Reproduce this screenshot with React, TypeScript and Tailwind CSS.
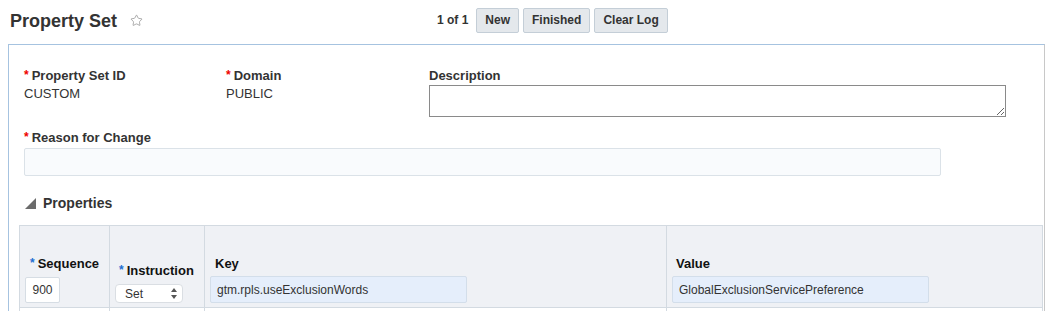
import React from "react";
import { Star } from "lucide-react";

const Req = ({ color = "text-[#e00]" }: { color?: string }) => (
  <span className={`${color} relative -top-[1px] mr-[3px] text-[12px]`}>*</span>
);

const ToolbarButton = ({ label }: { label: string }) => (
  <button className="h-[25px] rounded-[2px] border border-[#c4ced7] bg-[#e4e8ec] px-[8px] text-[12px] font-bold text-[#333]">
    {label}
  </button>
);

const SortArrows = () => (
  <svg width="6" height="11" viewBox="0 0 6 11" className="text-[#555]">
    <polygon points="3,0 6,4 0,4" fill="currentColor" />
    <polygon points="0,7 6,7 3,11" fill="currentColor" />
  </svg>
);

export default function App() {
  return (
    <div
      className="h-[311px] w-[1046px] overflow-hidden bg-white text-[#333]"
      style={{ fontFamily: '"Liberation Sans", Arial, sans-serif' }}
    >
      {/* Header */}
      <div className="flex h-[44px]">
        <div className="flex w-[437px] items-start pl-[10px] pt-[11px]">
          <h1 className="text-[18px] font-bold leading-[20px] text-[#333]">Property Set</h1>
          <Star size={13} strokeWidth={1.3} className="ml-[13px] mt-[3px] text-[#8a8a8a]" />
        </div>
        <div className="flex h-[40px] items-center gap-[4px]">
          <span className="mr-[4px] text-[12px] font-bold text-[#333]">1 of 1</span>
          <ToolbarButton label="New" />
          <ToolbarButton label="Finished" />
          <ToolbarButton label="Clear Log" />
        </div>
      </div>

      {/* Panel */}
      <div className="ml-[8px] h-[267px] w-[1037px] border-l border-t border-r border-[#a6c3e0] border-r-[#c8c8c8]">
        <div className="pl-[15px] pt-[23px]">
          <div className="flex">
            <div className="w-[202px]">
              <div className="text-[13px] font-bold leading-[15px]">
                <Req />
                Property Set ID
              </div>
              <div className="mt-[2px] text-[13px] leading-[15px]">CUSTOM</div>
            </div>
            <div className="w-[203px]">
              <div className="text-[13px] font-bold leading-[15px]">
                <Req />
                Domain
              </div>
              <div className="mt-[2px] text-[13px] leading-[15px]">PUBLIC</div>
            </div>
            <div>
              <div className="text-[13px] font-bold leading-[15px]">Description</div>
              <textarea className="mt-[2px] block h-[32px] w-[577px] border border-[#8a8a8a] bg-white" />
            </div>
          </div>

          <div className="mt-[13px] text-[13px] font-bold leading-[15px]">
            <Req />
            Reason for Change
          </div>
          <div className="mt-[2px] h-[28px] w-[917px] rounded-[2px] border border-[#dbe2e8] bg-[#f9fbfd]" />

          <div className="mt-[19px] flex items-center">
            <svg width="11" height="11" viewBox="0 0 11 11" className="ml-[1px]">
              <polygon points="11,0 11,11 0,11" fill="#6b6b6b" />
            </svg>
            <span className="ml-[7px] text-[14px] font-bold leading-[16px] text-[#333]">Properties</span>
          </div>
        </div>

        {/* Table */}
        <div className="ml-[10px] mt-[14px] w-[1024px] border-l border-t border-[#d3dae1]">
          <div className="grid h-[82px] grid-cols-[90px_95px_462px_1fr] border-b border-[#d3dae1] bg-[#eff1f5] text-[13px] text-[#111]">
            <div className="flex flex-col justify-end border-r border-[#d3dae1] px-[5px] pb-[4px]">
              <div className="mb-[5px] pl-[5px] font-bold leading-[15px]">
                <Req color="text-[#1f6fd1]" />
                Sequence
              </div>
              <div className="flex h-[26px] w-[35px] items-center justify-center rounded-[2px] border border-[#d6dde4] bg-white text-[12px] text-[#333]">
                900
              </div>
            </div>
            <div className="flex flex-col justify-end border-r border-[#d3dae1] px-[5px] pb-[4px]">
              <div className="mb-[5px] pl-[4px] font-bold leading-[15px]">
                <Req color="text-[#1f6fd1]" />
                Instruction
              </div>
              <div className="flex h-[19px] w-[68px] items-center justify-between rounded-[4px] border border-[#dadee3] bg-white pl-[9px] pr-[5px] text-[12px] text-[#333]">
                <span>Set</span>
                <SortArrows />
              </div>
            </div>
            <div className="flex flex-col justify-end border-r border-[#d3dae1] px-[5px] pb-[4px]">
              <div className="mb-[5px] pl-[5px] font-bold leading-[15px]">Key</div>
              <div className="flex h-[27px] w-[257px] items-center rounded-[2px] border border-[#d3deea] bg-[#e5eefb] pl-[6px] text-[12px] text-[#333]">
                gtm.rpls.useExclusionWords
              </div>
            </div>
            <div className="flex flex-col justify-end border-r border-[#d3dae1] px-[5px] pb-[4px]">
              <div className="mb-[5px] pl-[4px] font-bold leading-[15px]">Value</div>
              <div className="flex h-[27px] w-[257px] items-center rounded-[2px] border border-[#d3deea] bg-[#e5eefb] pl-[6px] text-[12px] text-[#333]">
                GlobalExclusionServicePreference
              </div>
            </div>
          </div>
          <div className="grid h-[30px] grid-cols-[90px_95px_462px_1fr]">
            <div className="border-r border-[#d3dae1]" />
            <div className="border-r border-[#d3dae1]" />
            <div className="border-r border-[#d3dae1]" />
            <div className="border-r border-[#d3dae1]" />
          </div>
        </div>
      </div>
    </div>
  );
}
